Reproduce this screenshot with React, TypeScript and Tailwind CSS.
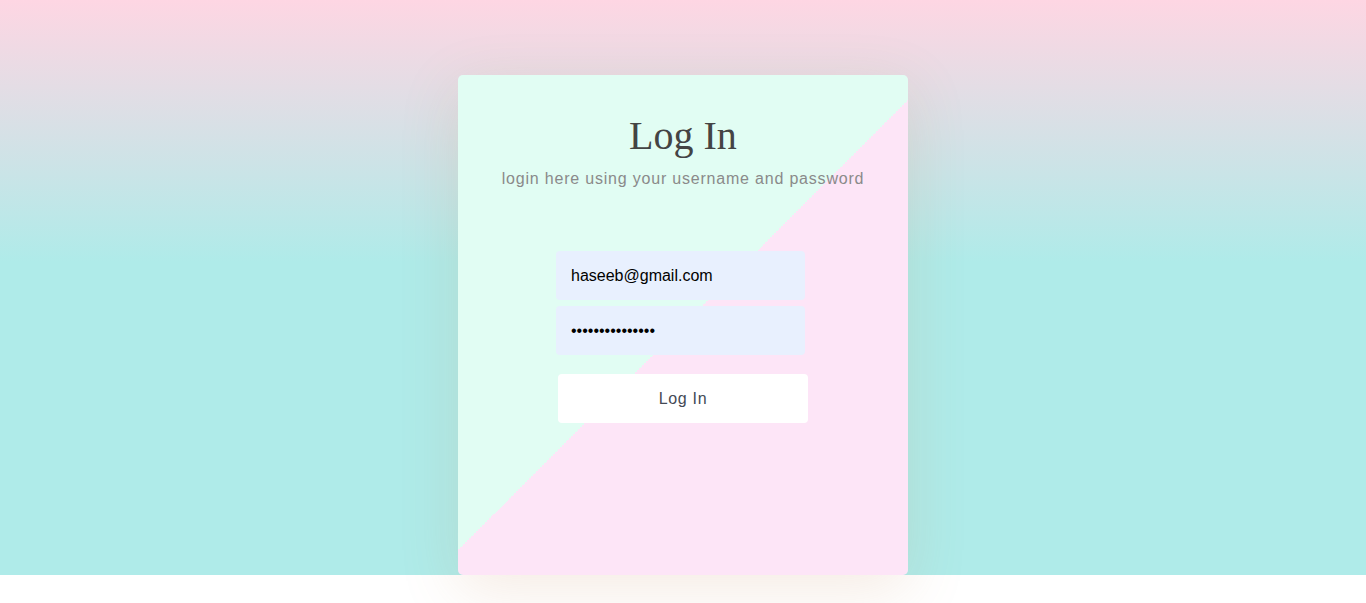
import React from "react";

export default function App() {
  return (
    <div className="w-full bg-white" style={{ fontFamily: '"Liberation Sans", Arial, sans-serif' }}>
      <div className="w-full h-[575px] pt-[75px] flex justify-center bg-[linear-gradient(to_bottom,#fed6e3_0px,#afebe9_262px)]">
        <div className="w-[450px] h-[500px] rounded-[5px] flex flex-col items-center pt-[39px] bg-[linear-gradient(135deg,#e1fdf3_50%,#fde5f7_50%)] shadow-[0_15px_60px_rgba(190,130,80,0.16)]">
          <h1
            className="text-[40px] leading-[44px] text-[#444444] font-normal"
            style={{ fontFamily: '"Liberation Serif", "Times New Roman", serif' }}
          >
            Log In
          </h1>
          <p className="mt-[12px] text-[16px] leading-[18px] tracking-[0.8px] text-[#8a8a8a]">
            login here using your username and password
          </p>
          <form className="mt-[63px] flex flex-col items-center" onSubmit={(e) => e.preventDefault()}>
            <input
              type="text"
              defaultValue="haseeb@gmail.com"
              className="w-[249px] h-[49px] mr-[5px] rounded-[4px] bg-[#e8f0fe] pl-[15px] text-[16px] text-black outline-none"
            />
            <input
              type="password"
              defaultValue="abcdefghijklmno"
              className="w-[249px] h-[49px] mr-[5px] mt-[6px] rounded-[4px] bg-[#e8f0fe] pl-[15px] text-[16px] text-black outline-none"
            />
            <button
              type="submit"
              className="w-[250px] h-[49px] mt-[19px] rounded-[4px] bg-white text-[16px] tracking-[0.7px] text-[#444a55]"
            >
              Log In
            </button>
          </form>
        </div>
      </div>
      <div className="h-[28px]" />
    </div>
  );
}
